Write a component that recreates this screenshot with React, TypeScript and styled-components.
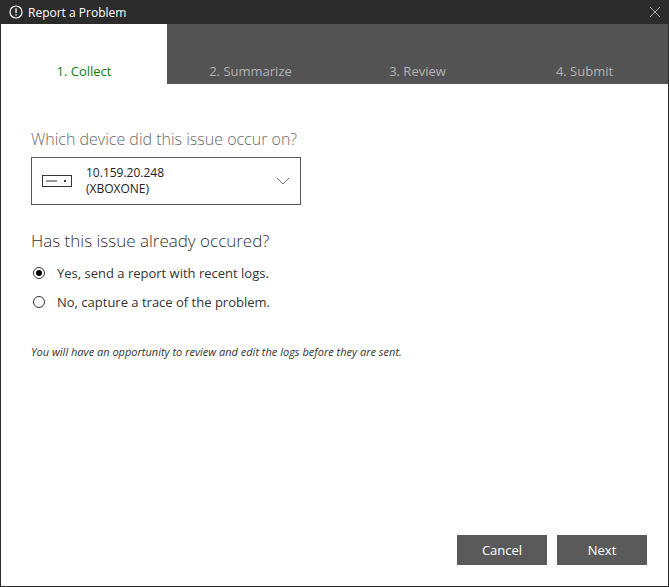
import React from "react";
import styled, { createGlobalStyle } from "styled-components";

const G = createGlobalStyle`
  html, body { margin: 0; padding: 0; background: #fff; }
  body { font-family: "Open Sans", "Segoe UI", "Liberation Sans", sans-serif; }
`;

const Win = styled.div`
  width: 669px; height: 587px; box-sizing: border-box;
  border: 1px solid #2b2b2b; border-top: none;
  display: flex; flex-direction: column; background: #fff;
`;
const Title = styled.div`
  height: 24px; background: #2b2b2b; color: #fff; margin: 0 -1px;
  display: flex; align-items: center; padding: 0 8px 0 9px; font-size: 12px; gap: 5px;
`;
const TitleText = styled.span`flex: 1;`;
const Tabs = styled.div`
  display: grid; grid-template-columns: 166px 167px 167px 1fr; height: 60px; background: #535353;
`;
const Tab = styled.div<{ $active?: boolean }>`
  background: ${p => (p.$active ? "#fff" : "transparent")};
  color: ${p => (p.$active ? "#107c10" : "#b4b4b4")};
  font-size: 13px; display: flex; align-items: flex-end; justify-content: center;
  padding-bottom: 4px;
`;
const Body = styled.div`
  flex: 1; padding: 43px 30px 0 30px; display: flex; flex-direction: column;
`;
const H = styled.div`
  font-size: 16px; color: #6a6a6a; font-weight: 300; line-height: 24px;
`;
const H2 = styled.div`
  font-size: 17px; color: #333; font-weight: 300; line-height: 24px; margin: 24px 0 5px;
`;
const Select = styled.div`
  margin-top: 6px; width: 270px; height: 48px; border: 1px solid #5a5a5a; box-sizing: border-box;
  display: flex; align-items: center; padding: 0 10px; gap: 14px;
`;
const SelText = styled.div`flex: 1; font-size: 12px; color: #222; line-height: 16px;`;
const Radio = styled.label`
  display: flex; align-items: center; gap: 12px; font-size: 13px; color: #333; height: 29px;
`;
const Circle = styled.span<{ $on?: boolean }>`
  width: 12px; height: 12px; border: 1px solid #333; border-radius: 50%; box-sizing: border-box;
  display: flex; align-items: center; justify-content: center; margin-left: 2px;
  &::after { content: ""; width: 6px; height: 6px; border-radius: 50%; background: ${p => (p.$on ? "#000" : "transparent")}; }
`;
const Note = styled.div`font-size: 11px; font-style: italic; color: #333; margin-top: 28px;`;
const Footer = styled.div`
  display: flex; justify-content: flex-end; gap: 10px; padding: 0 21px 21px 0;
`;
const Btn = styled.button`
  width: 90px; height: 30px; border: none; background: #5a5a5a; color: #fff;
  font-family: inherit; font-size: 13px;
`;

export default function App() {
  return (
    <>
      <G />
      <Win>
        <Title>
          <svg width="14" height="14" viewBox="0 0 14 14">
            <circle cx="7" cy="7" r="6" fill="none" stroke="#fff" strokeWidth="1.2" />
            <rect x="6.4" y="3.3" width="1.3" height="4.8" fill="#fff" />
            <rect x="6.4" y="9.3" width="1.3" height="1.4" fill="#fff" />
          </svg>
          <TitleText>Report a Problem</TitleText>
          <svg width="12" height="12" viewBox="0 0 12 12">
            <path d="M1 1L11 11M11 1L1 11" stroke="#aaa" strokeWidth="1" />
          </svg>
        </Title>
        <Tabs>
          <Tab $active>1. Collect</Tab>
          <Tab>2. Summarize</Tab>
          <Tab>3. Review</Tab>
          <Tab>4. Submit</Tab>
        </Tabs>
        <Body>
          <H>Which device did this issue occur on?</H>
          <Select>
            <svg width="30" height="12" viewBox="0 0 30 12">
              <rect x="0.5" y="0.5" width="29" height="11" fill="none" stroke="#333" />
              <line x1="4" y1="6" x2="15" y2="6" stroke="#333" />
              <rect x="22" y="5" width="2" height="2" fill="#333" />
            </svg>
            <SelText>10.159.20.248<br />(XBOXONE)</SelText>
            <svg width="14" height="8" viewBox="0 0 14 8">
              <path d="M1 1L7 7L13 1" fill="none" stroke="#777" />
            </svg>
          </Select>
          <H2>Has this issue already occured?</H2>
          <Radio><Circle $on />Yes, send a report with recent logs.</Radio>
          <Radio><Circle />No, capture a trace of the problem.</Radio>
          <Note>You will have an opportunity to review and edit the logs before they are sent.</Note>
        </Body>
        <Footer>
          <Btn>Cancel</Btn>
          <Btn>Next</Btn>
        </Footer>
      </Win>
    </>
  );
}
